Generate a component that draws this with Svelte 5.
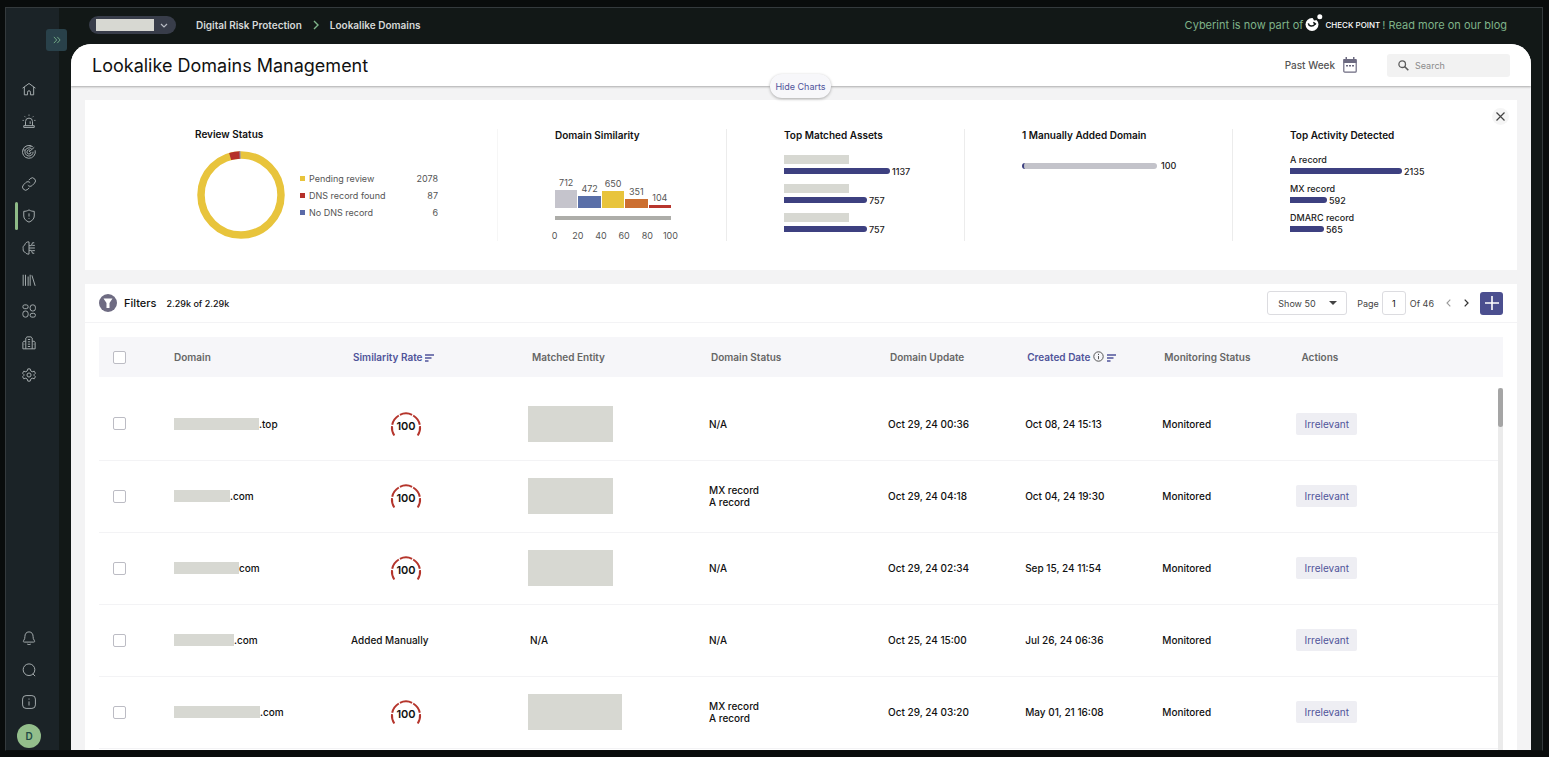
<script>
  const nav = ['home', 'alerts', 'radar', 'link', 'shield', 'brain', 'library', 'apps', 'reports', 'settings'];
  const tools = ['bell', 'search', 'info'];
  const labels = {
    home: 'Home', alerts: 'Alerts', radar: 'Radar', link: 'Links', shield: 'Risk protection',
    brain: 'Intelligence', library: 'Library', apps: 'Apps', reports: 'Reports', settings: 'Settings',
    bell: 'Notifications', search: 'Search', info: 'Information'
  };

  const review = [
    { name: 'Pending review', value: 2078, color: '#e8c43c' },
    { name: 'DNS record found', value: 87, color: '#b5302a' },
    { name: 'No DNS record', value: 6, color: '#5a6aa8' }
  ];
  const similarity = [
    { value: 712, color: '#c5c4cc' },
    { value: 472, color: '#5a6fa8' },
    { value: 650, color: '#e8c43c' },
    { value: 351, color: '#cc6e30' },
    { value: 104, color: '#b8352d' }
  ];
  const ticks = [0, 20, 40, 60, 80, 100];
  const assets = [
    { value: 1137, width: 106 },
    { value: 757, width: 83 },
    { value: 757, width: 83 }
  ];
  const activity = [
    { name: 'A record', value: 2135, width: 112 },
    { name: 'MX record', value: 592, width: 37 },
    { name: 'DMARC record', value: 565, width: 34 }
  ];
  const rows = [
    { mask: 85, tld: '.top', entity: 85, status: ['N/A'], update: 'Oct 29, 24 00:36', created: 'Oct 08, 24 15:13' },
    { mask: 56, tld: '.com', entity: 85, status: ['MX record', 'A record'], update: 'Oct 29, 24 04:18', created: 'Oct 04, 24 19:30' },
    { mask: 65, tld: 'com', entity: 85, status: ['N/A'], update: 'Oct 29, 24 02:34', created: 'Sep 15, 24 11:54' },
    { mask: 60, tld: '.com', manual: true, status: ['N/A'], update: 'Oct 25, 24 15:00', created: 'Jul 26, 24 06:36' },
    { mask: 86, tld: '.com', entity: 94, status: ['MX record', 'A record'], update: 'Oct 29, 24 03:20', created: 'May 01, 21 16:08' }
  ];
</script>

{#snippet icon(name)}
  <svg class="icon" viewBox="0 0 24 24" aria-hidden="true">
    {#if name === 'home'}
      <path d="M1 10.500 12 2.500l11 8M4 8.500V22h5.500v-4.500a2.500 2.500 0 0 1 5 0V22H20V8.500" />
    {:else if name === 'alerts'}
      <path d="M6 20v-7a6 6 0 0 1 12 0v7M3 20h18v3H3zM14 12.500V17M12 1v2M4.500 4l1.500 1.500M19.500 4 18 5.500M1 11h2M21 11h2" />
    {:else if name === 'radar'}
      <path d="M18.500 3A11 11 0 1 0 22.500 9M16.500 6.500A7 7 0 1 0 19 11.500M14 9a3.500 3.500 0 1 0 1.500 3M12 12l9-8M12 1.200l4 1M2 8l3 1" />
    {:else if name === 'link'}
      <path d="M10 14a5 5 0 0 0 7.500.5l4-4a5 5 0 0 0-7.500-7.500l-2.500 2.500M14 10a5 5 0 0 0-7.500-.5l-4 4A5 5 0 0 0 10 21l2.500-2.500" />
    {:else if name === 'shield'}
      <path d="M12 1.500c3 2 6 2.500 9 2.500v8c0 5-4 8.500-9 10.500-5-2-9-5.500-9-10.500V4c3 0 6-.5 9-2.500zM12 7.500v5.500M12 15.500v1.500" />
    {:else if name === 'brain'}
      <path d="M12 1.500v21M12 1.500C8 1 5.500 3.500 5 6.500 2 8 1.500 10.500 2 13c-.5 3.500 1 6 3.500 6.500 1.500 2.500 4 3 6.500 3M12 8h4l2-5h3M12 12h10M12 16h4l2 5h3M17.500 7.500h4.500M17.500 16.500h4.500" />
    {:else if name === 'library'}
      <path d="M2 3v19M6 3v19M10.500 6v16M14 3v19M17 4l5.500 18" />
    {:else if name === 'apps'}
      <rect x="1.500" y="1.500" width="9" height="6.500" rx="3" /><rect x="1.500" y="12" width="9" height="10.500" rx="4" />
      <rect x="14" y="1.500" width="9" height="10.500" rx="4" /><rect x="14" y="16" width="9" height="6.500" rx="3" />
    {:else if name === 'reports'}
      <path d="M6.500 22V3.500l2-2h7l2 2V22M6.500 9H3L1.500 11v11h21V11L21 9h-3.500M10 6h4M10 10h4M10 14h4M10 18h4M3 14h1M20 14h1" />
    {:else if name === 'settings'}
      <path d="M10 1.500h4l1 3.500 2.500 1.500L21 5.500l2 3.500-2.500 2.500v1L23 15l-2 3.500-3.500-1L15 19l-1 3.500h-4L9 19l-2.500-1.500-3.500 1L1 15l2.500-2.500v-1L1 9l2-3.500 3.500 1L9 5z" /><circle cx="12" cy="12" r="3.500" />
    {:else if name === 'bell'}
      <path d="M12 1.500c-5 0-7 4-7 8 0 3-.5 4.500-2 6.500-1.500 2-.5 3 1 3h16c1.500 0 2.500-1 1-3-1.500-2-2-3.500-2-6.500 0-4-2-8-7-8zM9 22.500c2 1 4 1 6 0" />
    {:else if name === 'search'}
      <circle cx="12" cy="11.500" r="10" /><path d="m18.500 18.500 4 4" />
    {:else if name === 'info'}
      <rect x="1" y="1" width="22" height="22" rx="6" /><path d="M12 11v7M12 6v2" />
    {/if}
  </svg>
{/snippet}

{#snippet sortIcon()}
  <svg width="9" height="8" viewBox="0 0 9 8" aria-hidden="true"><path d="M0 1h9M0 4h6.500M0 7h3.500" stroke="#50549a" stroke-width="1.300" fill="none" /></svg>
{/snippet}

<div class="window">
  <div class="frame">
    <aside>
      <button class="expand" aria-label="Expand menu">
        <svg width="8" height="8" viewBox="0 0 9 9"><path d="M1 1l3.200 3.500L1 8M4.800 1 8 4.500 4.800 8" fill="none" stroke="#76b08a" stroke-width="1" /></svg>
      </button>
      <nav>
        {#each nav as name}
          <button class:active={name === 'shield'} aria-label={labels[name]}>{@render icon(name)}</button>
        {/each}
      </nav>
      <div class="tools">
        {#each tools as name}
          <button aria-label={labels[name]}>{@render icon(name)}</button>
        {/each}
        <button class="avatar">D</button>
      </div>
    </aside>

    <div class="page">
      <header class="top">
        <button class="tenant" aria-label="Choose account">
          <span class="mask"></span>
          <svg width="8" height="5" viewBox="0 0 8 5"><path d="M1 1l3 3 3-3" fill="none" stroke="#b8bcc4" stroke-width="1.200" /></svg>
        </button>
        <div class="crumbs">
          <a href="#risk">Digital Risk Protection</a>
          <svg width="6" height="10" viewBox="0 0 6 10"><path d="M1 1l4 4-4 4" fill="none" stroke="#7fb58a" stroke-width="1.400" /></svg>
          <a href="#lookalike">Lookalike Domains</a>
        </div>
        <a class="news" href="#blog">
          <span>Cyberint is now part of</span>
          <svg width="18" height="18" viewBox="0 0 18 18" aria-hidden="true">
            <circle cx="7" cy="10.500" r="6.500" fill="#fff" />
            <path d="M7.500 3.500 9 6.500l3.500-.5-1.500-3z" fill="#121817" />
            <path d="M3.300 9.300c.5 3 4.500 4 6.800.5M8.300 8.300l2.700 2" fill="none" stroke="#121817" stroke-width="1.500" />
            <circle cx="14.800" cy="2.700" r="2.500" fill="#fff" />
          </svg>
          <span class="brand">CHECK POINT</span>
          <span>! Read more on our blog</span>
        </a>
      </header>

      <main>
        <div class="title">
          <h1>Lookalike Domains Management</h1>
          <button class="period">Past Week
            <svg width="14" height="16" viewBox="0 0 14 16" aria-hidden="true"><path d="M1.800 2.500h10.400a1 1 0 0 1 1 1v10.700a1 1 0 0 1-1 1H1.800a1 1 0 0 1-1-1V3.500a1 1 0 0 1 1-1z" fill="none" stroke="#6c6a80" stroke-width="1.200" /><path d="M.5 2h13v4H.5zM2.500 0H4v3H2.500zM10 0h1.500v3H10zM3 8h2v1.500H3zM6 8h2v1.500H6zM9 8h2v1.500H9z" fill="#6c6a80" /></svg>
          </button>
          <label class="find">
            <svg width="11" height="11" viewBox="0 0 11 11" aria-hidden="true"><circle cx="4.200" cy="4.200" r="3.300" fill="none" stroke="#5c5c5c" stroke-width="1.300" /><path d="m6.800 6.800 3.500 3.500" stroke="#5c5c5c" stroke-width="1.600" /></svg>
            <input type="text" placeholder="Search" aria-label="Search" />
          </label>
          <button class="hide">Hide Charts</button>
        </div>

        <div class="content">
          <section class="charts">
            <button class="close" aria-label="Close charts">
              <svg width="9" height="9" viewBox="0 0 9 9"><path d="m.5.500 8 8M8.500.5l-8 8" stroke="#444" stroke-width="1.200" /></svg>
            </button>
            <article class="review">
              <h2>Review Status</h2>
              <div class="status">
                <svg width="88" height="88" viewBox="0 0 88 88" aria-hidden="true">
                  <g transform="rotate(-90 44 44)" fill="none" stroke-width="7.500">
                    <circle cx="44" cy="44" r="40" stroke="#e8c43c" pathLength="1000" />
                    <circle cx="44" cy="44" r="40" stroke="#b5302a" pathLength="1000" stroke-dasharray="40 960" stroke-dashoffset="-956" />
                    <circle cx="44" cy="44" r="40" stroke="#8a8db8" pathLength="1000" stroke-dasharray="4 996" stroke-dashoffset="-994" />
                  </g>
                </svg>
                <ul>
                  {#each review as r}
                    <li><i style="background:{r.color}"></i><span>{r.name}</span><b>{r.value}</b></li>
                  {/each}
                </ul>
              </div>
            </article>
            <article>
              <h2>Domain Similarity</h2>
              <div class="columns">
                {#each similarity as s}
                  <div><span>{s.value}</span><i style="height:{Math.round(s.value / 39)}px;background:{s.color}"></i></div>
                {/each}
              </div>
              <div class="axis"></div>
              <div class="ticks">
                {#each ticks as t}<span>{t}</span>{/each}
              </div>
            </article>
            <article>
              <h2>Top Matched Assets</h2>
              <div class="bars">
                {#each assets as a}
                  <div class="bar"><span class="name"><i class="mask"></i></span><span class="line"><i style="width:{a.width}px"></i>{a.value}</span></div>
                {/each}
              </div>
            </article>
            <article>
              <h2>1 Manually Added Domain</h2>
              <div class="manual"><i></i>100</div>
            </article>
            <article>
              <h2>Top Activity Detected</h2>
              <div class="bars">
                {#each activity as a}
                  <div class="bar"><span class="name">{a.name}</span><span class="line"><i style="width:{a.width}px"></i>{a.value}</span></div>
                {/each}
              </div>
            </article>
          </section>

          <section class="list">
            <div class="toolbar">
              <button class="filters">
                <svg width="18" height="18" viewBox="0 0 18 18" aria-hidden="true"><circle cx="9" cy="9" r="9" fill="#6e6b82" /><path d="M4.500 4.500h9L10.500 9v5h-3V9z" fill="#fff" /></svg>
                Filters
              </button>
              <span class="count">2.29k of 2.29k</span>
              <div class="select">
                <select aria-label="Rows per page"><option>Show 50</option></select>
                <svg width="8" height="4" viewBox="0 0 8 4" aria-hidden="true"><path d="M0 0h8L4 4z" fill="#444" /></svg>
              </div>
              <label class="pager">Page <input type="text" value="1" /></label>
              <span class="of">Of 46</span>
              <button class="step" aria-label="Previous page"><svg width="5" height="8" viewBox="0 0 5 8"><path d="M4.300.6 1 4l3.300 3.400" fill="none" stroke="#999" stroke-width="1.100" /></svg></button>
              <button class="step" aria-label="Next page"><svg width="5" height="8" viewBox="0 0 5 8"><path d="M.7.6 4 4 .7 7.400" fill="none" stroke="#333" stroke-width="1.300" /></svg></button>
              <button class="add" aria-label="Add domain"><svg width="14" height="14" viewBox="0 0 14 14"><path d="M7 0v14M0 7h14" stroke="#fff" stroke-width="1.600" /></svg></button>
            </div>

            <div class="tablewrap">
              <table>
                <colgroup>
                  <col class="c-check" /><col class="c-wide" /><col class="c-wide" /><col class="c-wide" /><col class="c-wide" />
                  <col class="c-mid" /><col class="c-mid" /><col class="c-mid" /><col />
                </colgroup>
                <thead>
                  <tr>
                    <th><input type="checkbox" aria-label="Select all" /></th>
                    <th>Domain</th>
                    <th class="sorted">Similarity Rate {@render sortIcon()}</th>
                    <th>Matched Entity</th>
                    <th>Domain Status</th>
                    <th>Domain Update</th>
                    <th class="sorted">Created Date
                      <svg width="11" height="11" viewBox="0 0 11 11" aria-hidden="true"><circle cx="5.500" cy="5.500" r="4.700" fill="none" stroke="#555" /><path d="M5.500 5v3.200M5.500 2.800V4" stroke="#555" /></svg>
                      {@render sortIcon()}
                    </th>
                    <th>Monitoring Status</th>
                    <th>Actions</th>
                  </tr>
                </thead>
                <tbody>
                  <tr class="spacer"><td colspan="9"></td></tr>
                  {#each rows as r, n}
                    <tr>
                      <td><input type="checkbox" aria-label="Select row {n + 1}" /></td>
                      <td><span class="domain"><i class="mask" style="width:{r.mask}px"></i>{r.tld}</span></td>
                      <td>
                        {#if r.manual}
                          Added Manually
                        {:else}
                          <svg class="gauge" width="32" height="28" viewBox="0 0 32 28" role="img" aria-label="100">
                            <path d="M4.300 25.500A14 14 0 0 1 2 16.200M2.200 14.800A14 14 0 0 1 8.800 5.500M9.900 4.800A14 14 0 0 1 22.100 4.800M23.200 5.500A14 14 0 0 1 29.800 14.800M30 16.200A14 14 0 0 1 27.700 25.500" fill="none" stroke="#b5352c" stroke-width="2" />
                            <text x="16" y="20" text-anchor="middle">100</text>
                          </svg>
                        {/if}
                      </td>
                      <td>{#if r.manual}N/A{:else}<i class="mask entity" style="width:{r.entity}px"></i>{/if}</td>
                      <td>{#each r.status as s}<div>{s}</div>{/each}</td>
                      <td>{r.update}</td>
                      <td>{r.created}</td>
                      <td>Monitored</td>
                      <td><button class="action">Irrelevant</button></td>
                    </tr>
                  {/each}
                </tbody>
              </table>
              <div class="scroll"><i></i></div>
            </div>
          </section>
        </div>
      </main>
    </div>
  </div>
</div>

<style>
  :global(body) { background: #090c0c; }
  * { box-sizing: border-box; }
  .window { height: 100vh; padding: 7px 6px 6px 5px; font-family: Inter, sans-serif; font-size: 10px; color: #111; }
  button { font: inherit; color: inherit; background: none; border: 0; padding: 0; margin: 0; display: flex; align-items: center; justify-content: center; }
  a { color: inherit; text-decoration: none; }
  h1, h2, ul { margin: 0; padding: 0; list-style: none; }
  svg { flex: none; }
  .mask { display: block; background: #d7d8d2; }

  .frame { height: 100%; display: flex; border: 1px solid #343a3d; border-bottom-color: #0b0e0e; background: #121817; }
  aside { position: relative; width: 53px; flex: none; background: #1b2327; display: flex; flex-direction: column; justify-content: space-between; padding: 65px 0 0; }
  .expand { position: absolute; left: 40px; top: 21px; width: 21px; height: 22px; border-radius: 3px; background: #29414a; }
  nav { display: grid; height: 318px; }
  aside button { padding-right: 7px; }
  aside .expand { padding: 0; }
  .icon { width: 14px; height: 14px; fill: none; stroke: #a4abad; stroke-width: 1.700; stroke-linejoin: round; }
  .active { position: relative; }
  .active::before { content: ''; position: absolute; left: 9px; top: 2px; bottom: 2px; width: 3px; border-radius: 2px; background: #8fbb88; }
  .tools { display: flex; flex-direction: column; }
  .tools button { height: 32px; }
  .tools .avatar { width: 24px; height: 24px; margin: 6px 0 2px 11px; padding: 0; border-radius: 50%; background: #93be8b; color: #1f4a45; font-weight: 600; }

  .page { flex: 1; min-width: 0; display: flex; flex-direction: column; padding: 0 11px 0 12px; }
  .top { height: 36px; flex: none; display: flex; align-items: center; padding: 0 24px 2px 18px; color: #d6d8d8; }
  .tenant { height: 18px; gap: 6px; padding: 0 8px 0 7px; border-radius: 9px; background: #383d4a; }
  .tenant .mask { width: 58px; height: 12px; }
  .crumbs { display: flex; align-items: center; gap: 11px; margin-left: 20px; font-weight: 600; }
  .news { display: flex; align-items: center; gap: 2px; margin-left: auto; color: #7fb389; font-size: 11px; }
  .news svg { margin-bottom: 4px; }
  .brand { color: #fff; font-size: 8px; font-weight: 500; }

  main { flex: 1; min-height: 0; display: flex; flex-direction: column; overflow: hidden; border-radius: 20px 20px 0 0; background: #f3f3f4; }
  .title { position: relative; z-index: 1; height: 42px; flex: none; display: flex; align-items: center; padding: 0 21px; background: #fff; box-shadow: 0 1px 2px #aaa; }
  h1 { font-size: 18px; font-weight: 400; }
  .period { gap: 8px; margin-left: auto; font-size: 10px; font-weight: 500; color: #555; }
  .find { width: 123px; height: 23px; margin-left: 30px; display: flex; align-items: center; gap: 6px; padding: 0 11px; border-radius: 3px; background: #f2f2f2; }
  .find input { width: 100%; min-width: 0; border: 0; padding: 0; background: none; font: inherit; font-size: 9px; color: #333; }
  .find input::placeholder { color: #8b8b8b; }
  .hide { position: absolute; left: 50%; top: 30px; width: 61px; height: 24px; margin-left: -31px; border-radius: 12px; background: #f7f7fa; box-shadow: 0 1px 3px #aaa; color: #50549a; font-size: 9px; white-space: nowrap; }
  .content { flex: 1; min-height: 0; display: flex; flex-direction: column; gap: 14px; padding: 14px 14px 0; }

  .charts { position: relative; display: grid; grid-template-columns: 413fr 229fr 238fr 268fr 284fr; padding: 29px 0; background: #fff; }
  article { height: 112px; padding-left: 57px; border-right: 1px solid #ececec; }
  article:last-child { border: 0; }
  article.review { padding-left: 110px; border-color: #f6f6f6; }
  h2 { font-size: 10px; line-height: 13px; font-weight: 600; white-space: nowrap; }
  .review h2 { line-height: 10px; }
  .close { position: absolute; right: 8px; top: 8px; width: 17px; height: 17px; border-radius: 50%; background: #f5f5f5; }
  .status { display: flex; align-items: center; gap: 15px; padding: 12px 0 0 2px; color: #555; }
  .status ul { width: 138px; }
  .status li { display: flex; align-items: center; height: 17px; font-size: 9px; }
  .status li i { width: 5px; height: 5px; margin-right: 4px; }
  .status li b { margin-left: auto; font-weight: 400; }
  .columns { display: flex; align-items: flex-end; gap: 1px; width: 116px; height: 66px; font-size: 9px; color: #555; }
  .columns div { flex: 1; display: flex; flex-direction: column; align-items: center; line-height: 11px; gap: 2px; }
  .columns i { width: 100%; }
  .axis { width: 116px; height: 4px; margin-top: 8px; background: #adada9; }
  .ticks { display: flex; justify-content: space-between; width: 139px; margin: 10px 0 0 -12px; font-size: 9px; color: #555; }
  .ticks span { width: 24px; text-align: center; }
  .bars { padding-top: 11px; }
  .bar { height: 29px; font-size: 9px; font-weight: 500; color: #222; }
  .bar .name, .bar .line { display: flex; align-items: center; gap: 2px; height: 12px; white-space: nowrap; }
  .bar .mask { width: 65px; height: 9px; }
  .line i { height: 6px; border-radius: 0 3px 3px 0; background: #3d4080; }
  .manual { display: flex; align-items: center; gap: 4px; margin-top: 18px; font-size: 9px; font-weight: 500; color: #222; }
  .manual i { width: 135px; height: 6px; border-left: 2px solid #3d4080; border-radius: 3px; background: #c3c3ca; }

  .list { flex: 1; min-height: 0; display: flex; flex-direction: column; background: #fff; }
  .toolbar { height: 39px; flex: none; display: flex; align-items: center; padding: 0 14px; border-bottom: 1px solid #f3f3f5; color: #444; }
  .filters { gap: 7px; font-size: 11px; font-weight: 500; color: #111; }
  .count { margin-left: 10px; font-size: 9px; font-weight: 500; color: #111; }
  .select { position: relative; width: 80px; height: 24px; margin-left: auto; }
  .select select { width: 100%; height: 100%; padding: 0 10px; appearance: none; border: 1px solid #dcdce0; border-radius: 3px; background: #fff; font: inherit; font-size: 9px; color: #444; }
  .select svg { position: absolute; right: 10px; top: 10px; pointer-events: none; }
  .pager { display: flex; align-items: center; gap: 3px; margin-left: 10px; font-size: 9px; }
  .pager input { width: 24px; height: 24px; padding: 0; border: 1px solid #dcdce0; border-radius: 3px; text-align: center; font: inherit; color: #111; }
  .of { margin: 0 5px 0 4px; font-size: 9px; }
  .step { width: 18px; height: 18px; }
  .add { width: 23px; height: 23px; margin-left: 5px; border-radius: 3px; background: #4b4f8f; }

  .tablewrap { position: relative; flex: 1; min-height: 0; overflow: hidden; margin: 14px 14px 0; }
  table { width: 100%; table-layout: fixed; border-collapse: collapse; }
  .c-check { width: 73px; }
  .c-wide { width: 12.750%; }
  .c-mid { width: 9.770%; }
  th, td { padding: 0; text-align: left; white-space: nowrap; }
  th { height: 40px; padding-left: 2px; background: #f6f6f9; color: #666; font-weight: 600; }
  th svg { vertical-align: -1px; }
  .sorted { color: #50549a; }
  .spacer td { height: 11px; border: 0; }
  td { height: 72px; padding-left: 0; border-bottom: 1px solid #f3f3f5; line-height: 12px; font-weight: 500; }
  th:first-child, td:first-child { padding-left: 14px; }
  input[type='checkbox'] { display: block; appearance: none; width: 13px; height: 13px; margin: 0; border: 1px solid #bcbcc4; border-radius: 2px; background: #fff; }
  .domain { display: flex; align-items: center; padding-left: 2px; }
  .domain .mask { height: 12px; }
  .entity { height: 36px; margin-left: -2px; }
  .gauge { display: block; margin-left: 39px; }
  .gauge text { font-size: 11px; font-weight: 600; fill: #111; }
  .action { height: 22px; padding: 0 8px; margin-left: -3px; border-radius: 2px; background: #eeeef3; color: #50549a; font-weight: 400; }
  .scroll { position: absolute; right: 0; top: 51px; bottom: 0; width: 5px; background: #ebebeb; }
  .scroll i { display: block; height: 39px; border-radius: 3px; background: #a5a5a5; }
</style>
